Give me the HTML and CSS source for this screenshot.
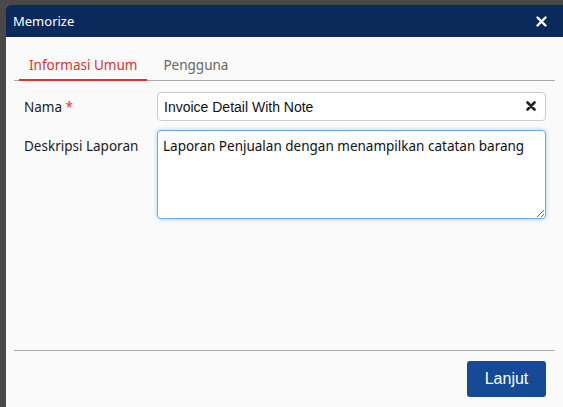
FILE: index.html
```html
<!DOCTYPE html>
<html lang="id">
<head>
    <meta charset="UTF-8">
    <meta name="viewport" content="width=device-width, initial-scale=1.0">
    <title>Memorize</title>
    <link rel="stylesheet" href="styles.css">
</head>
<body>
    <div class="modal">
        <div class="modal-header">
            <span class="modal-title">Memorize</span>
            <svg class="modal-close" width="11" height="11" viewBox="0 0 11 11">
                <path d="M1.5 1.5 L9.5 9.5 M9.5 1.5 L1.5 9.5" stroke="#fff" stroke-width="2.4" stroke-linecap="round"/>
            </svg>
        </div>
        <div class="modal-body">
            <ul class="tabs">
                <li class="tab active">Informasi Umum</li>
                <li class="tab">Pengguna</li>
            </ul>
            <form class="form-grid">
                <label class="form-label" for="nama">Nama <span class="req">*</span></label>
                <div class="input-wrap">
                    <input class="field" type="text" id="nama" value="Invoice Detail With Note">
                    <svg class="clear" width="10" height="10" viewBox="0 0 10 10">
                        <path d="M1.5 1.5 L8.5 8.5 M8.5 1.5 L1.5 8.5" stroke="#222" stroke-width="2.6" stroke-linecap="round"/>
                    </svg>
                </div>

                <label class="form-label top" for="deskripsi">Deskripsi Laporan</label>
                <textarea class="field area" id="deskripsi">Laporan Penjualan dengan menampilkan catatan barang</textarea>
            </form>
        </div>
        <div class="modal-footer">
            <button class="btn-primary" type="button">Lanjut</button>
        </div>
    </div>
</body>
</html>
```

FILE: styles.css
```css
body {
    margin: 0;
    padding: 0;
    background-color: #484848;
    font-family: "Noto Sans", "Open Sans", sans-serif;
    overflow: hidden;
}
.modal {
    margin: 5px 0 0 6px;
    height: 402px;
    background: #fafafa;
    border-radius: 4px 0 0 0;
    display: flex;
    flex-direction: column;
}
.modal-header {
    height: 32px;
    background: #0b2a5b;
    border-radius: 4px 0 0 0;
    color: #fff;
    display: flex;
    align-items: center;
    justify-content: space-between;
    padding: 0 16px 0 7px;
}
.modal-title {
    font-size: 13px;
}
.modal-close {
    display: block;
}
.modal-body {
    flex: 1;
    padding: 16px 8px 0 8px;
}
.tabs {
    list-style: none;
    margin: 0;
    padding: 0 0 0 5px;
    display: flex;
    gap: 6px;
    border-bottom: 1px solid #aaa;
}
.tab {
    padding: 4px 10px 6px;
    font-size: 13.5px;
    line-height: 16px;
    color: #666;
}
.tab.active {
    color: #d9342b;
    border-bottom: 2px solid #d9342b;
    margin-bottom: -1px;
}
.form-grid {
    display: grid;
    grid-template-columns: 133px 1fr;
    row-gap: 9px;
    padding: 11px 9px 0 10px;
}
.form-label {
    font-size: 13.5px;
    color: #1a1a1a;
    align-self: center;
}
.form-label.top {
    align-self: start;
    padding-top: 7px;
}
.req {
    color: #d9342b;
}
.input-wrap {
    position: relative;
}
.field {
    box-sizing: border-box;
    width: 100%;
    height: 29px;
    border: 1px solid #ccc;
    border-radius: 4px;
    background: #fff;
    padding: 0 30px 0 6px;
    font-family: "Liberation Sans", Arial, sans-serif;
    font-size: 14px;
    color: #111;
}
.clear {
    position: absolute;
    right: 10px;
    top: 9px;
}
.area {
    display: block;
    height: 89px;
    padding: 6px 5px;
    resize: vertical;
    font-family: "Noto Sans", "Open Sans", sans-serif;
    font-size: 13.5px;
    line-height: 19px;
    border-color: #66afe9;
    box-shadow: 0 0 4px rgba(102, 175, 233, 0.6);
    outline: none;
}
.modal-footer {
    margin: 0 8px;
    border-top: 1px solid #aaa;
    padding: 10px 9px 10px 0;
    display: flex;
    justify-content: flex-end;
}
.btn-primary {
    width: 79px;
    height: 36px;
    background-color: #164a96;
    color: #fff;
    border: none;
    border-radius: 3px;
    font-family: "Liberation Sans", Arial, sans-serif;
    font-size: 16px;
    cursor: pointer;
}
```
